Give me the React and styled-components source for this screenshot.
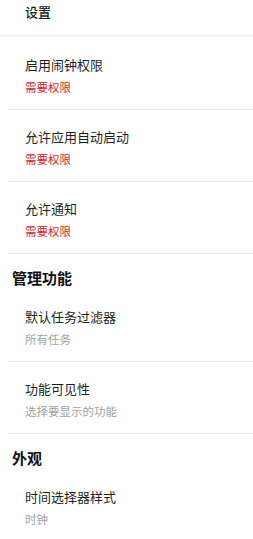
import React from "react";
import styled, { createGlobalStyle } from "styled-components";

const Global = createGlobalStyle`
  html, body { margin: 0; padding: 0; background: #fff; }
  body { font-family: "Noto Sans CJK SC", "Noto Sans", sans-serif; -webkit-font-smoothing: antialiased; }
`;

const Page = styled.div`
  width: 253px;
  background: #fff;
`;

const Header = styled.div`
  height: 36px;
  box-sizing: border-box;
  padding: 3px 0 0 25px;
  font-size: 13px;
  line-height: 18px;
  font-weight: 500;
  color: #1a1a1a;
  border-bottom: 1px solid #ebebeb;
  box-shadow: 0 1px 2px rgba(0, 0, 0, 0.04);
`;

const Row = styled.div`
  margin-left: 8px;
  padding: ${(p) => (p.$first ? "20px" : "18px")} 0 14px 17px;
  border-bottom: ${(p) => (p.$last ? "none" : "1px solid #e9e9e9")};
  display: flex;
  flex-direction: column;
  gap: 5px;
`;

const Title = styled.div`
  font-size: 13px;
  line-height: 18px;
  color: #1f1f1f;
`;

const Sub = styled.div`
  font-size: 11.5px;
  line-height: 16px;
  color: ${(p) => (p.$warn ? "#d7262e" : "#a3a3a3")};
`;

const Section = styled.div`
  padding: 13px 0 1px 12px;
  font-size: 15px;
  line-height: 22px;
  font-weight: 700;
  color: #111;
`;

const items = [
  { type: "row", title: "启用闹钟权限", sub: "需要权限", warn: true, first: true },
  { type: "row", title: "允许应用自动启动", sub: "需要权限", warn: true },
  { type: "row", title: "允许通知", sub: "需要权限", warn: true },
  { type: "section", title: "管理功能" },
  { type: "row", title: "默认任务过滤器", sub: "所有任务" },
  { type: "row", title: "功能可见性", sub: "选择要显示的功能" },
  { type: "section", title: "外观" },
  { type: "row", title: "时间选择器样式", sub: "时钟", last: true },
];

export default function App() {
  return (
    <Page>
      <Global />
      <Header>设置</Header>
      {items.map((it, i) =>
        it.type === "section" ? (
          <Section key={i}>{it.title}</Section>
        ) : (
          <Row key={i} $first={it.first} $last={it.last}>
            <Title>{it.title}</Title>
            <Sub $warn={it.warn}>{it.sub}</Sub>
          </Row>
        )
      )}
    </Page>
  );
}
